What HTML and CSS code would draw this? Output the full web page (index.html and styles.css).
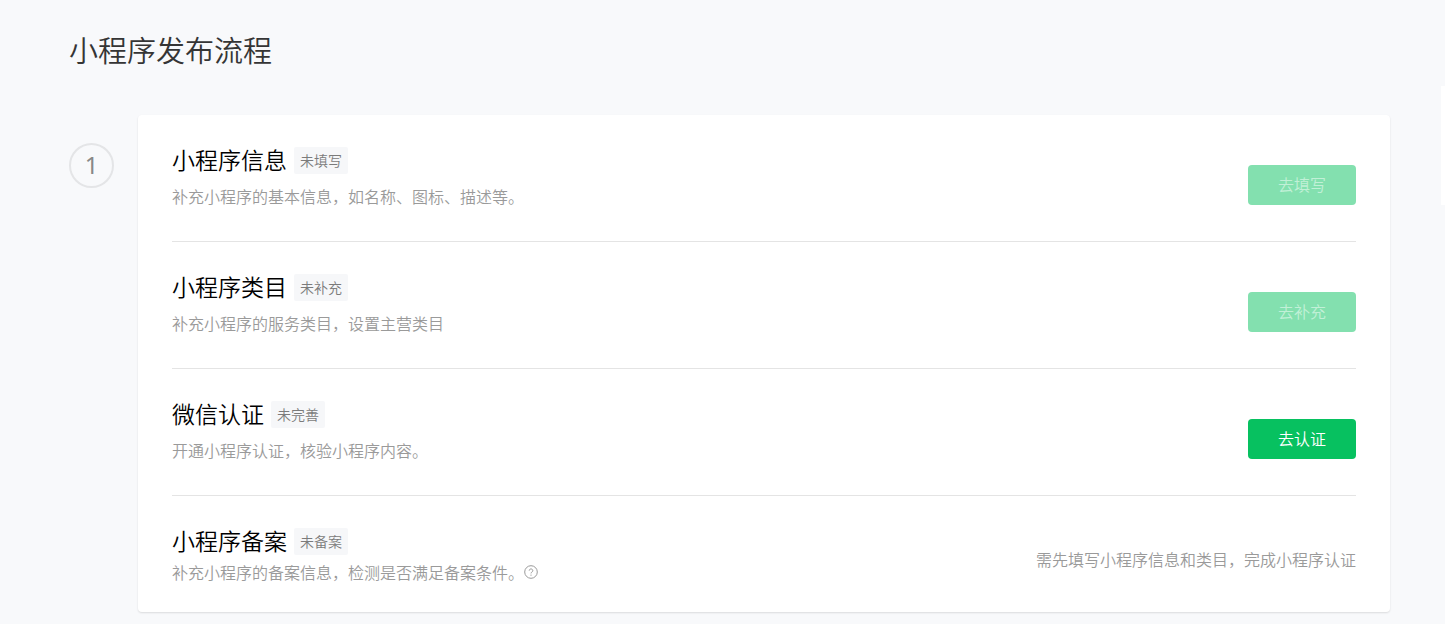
FILE: index.html
```
<!DOCTYPE html>
<html lang="zh-CN">
<head>
    <meta charset="UTF-8">
    <meta name="viewport" content="width=device-width, initial-scale=1.0">
    <title>小程序发布流程</title>
    <link rel="stylesheet" href="styles.css">
</head>
<body>
    <main class="page">
        <h1 class="page-title">小程序发布流程</h1>
        <section class="step">
            <div class="step-num">1</div>
            <div class="card">
                <div class="item">
                    <div class="info">
                        <div class="item-head">
                            <h2>小程序信息</h2>
                            <span class="tag">未填写</span>
                        </div>
                        <p class="desc">补充小程序的基本信息，如名称、图标、描述等。</p>
                    </div>
                    <div class="action">
                        <button type="button" class="btn" disabled>去填写</button>
                    </div>
                </div>
                <div class="item">
                    <div class="info">
                        <div class="item-head">
                            <h2>小程序类目</h2>
                            <span class="tag">未补充</span>
                        </div>
                        <p class="desc">补充小程序的服务类目，设置主营类目</p>
                    </div>
                    <div class="action">
                        <button type="button" class="btn" disabled>去补充</button>
                    </div>
                </div>
                <div class="item">
                    <div class="info">
                        <div class="item-head">
                            <h2>微信认证</h2>
                            <span class="tag">未完善</span>
                        </div>
                        <p class="desc">开通小程序认证，核验小程序内容。</p>
                    </div>
                    <div class="action">
                        <button type="button" class="btn">去认证</button>
                    </div>
                </div>
                <div class="item item-last">
                    <div class="info">
                        <div class="item-head">
                            <h2>小程序备案</h2>
                            <span class="tag">未备案</span>
                        </div>
                        <p class="desc">补充小程序的备案信息，检测是否满足备案条件。
                            <svg class="help" viewBox="0 0 14 14" width="14" height="14" aria-hidden="true">
                                <circle cx="7" cy="7" r="6.3" fill="none" stroke="currentColor"/>
                                <path d="M5.2 5.6a1.8 1.7 0 1 1 2.7 1.5c-.6.4-.9.6-.9 1.3" fill="none" stroke="currentColor"/>
                                <circle cx="7" cy="10.1" r=".7" fill="currentColor"/>
                            </svg>
                        </p>
                    </div>
                    <div class="action">
                        <span class="note">需先填写小程序信息和类目，完成小程序认证</span>
                    </div>
                </div>
            </div>
        </section>
    </main>
    <aside class="side-bar"></aside>
</body>
</html>
```

FILE: styles.css
```
* {
    margin: 0;
    padding: 0;
    box-sizing: border-box;
}
body {
    background-color: #f8f9fb;
    font-family: "Noto Sans CJK SC", sans-serif;
    font-weight: 350;
    color: #353535;
}
.page {
    padding: 28px 55px 12px 69px;
}
.page-title {
    font-size: 29px;
    line-height: 42px;
    font-weight: 350;
    margin-bottom: 45px;
}
.step {
    display: flex;
    align-items: flex-start;
    gap: 24px;
}
.step-num {
    flex: none;
    width: 45px;
    height: 45px;
    margin-top: 28px;
    border: 2px solid #e4e5e7;
    border-radius: 50%;
    font-family: "Noto Sans", sans-serif;
    font-size: 24px;
    line-height: 40px;
    font-weight: 400;
    text-align: center;
    color: #888;
}
.card {
    flex: 1;
    padding: 0 34px;
    background-color: #fff;
    border-radius: 4px;
    box-shadow: 0 1px 2px rgba(0, 0, 0, 0.12);
}
.item {
    display: flex;
    justify-content: space-between;
    align-items: flex-start;
    padding: 32px 0 33px;
    border-bottom: 1px solid #e4e4e4;
}
.item-head {
    display: flex;
    align-items: flex-start;
    gap: 7px;
}
.item-head h2 {
    font-size: 23px;
    line-height: 24px;
    font-weight: 350;
    color: #000;
}
.tag {
    padding: 0 6px;
    font-size: 14px;
    line-height: 27px;
    color: #7b7b7b;
    background-color: #f6f7f9;
    border-radius: 2px;
}
.desc {
    margin-top: 10px;
    font-size: 16px;
    line-height: 24px;
    color: #9a9a9a;
}
.action {
    padding-top: 18px;
}
.btn {
    display: block;
    width: 108px;
    height: 40px;
    padding-bottom: 2px;
    border: none;
    border-radius: 4px;
    background-color: #07c160;
    color: #fff;
    font-family: inherit;
    font-size: 16px;
    font-weight: 350;
    cursor: pointer;
}
.btn:disabled {
    background-color: #83e0af;
    color: #c1f0d7;
    cursor: default;
}
.item-last {
    padding-bottom: 28px;
    border-bottom: none;
}
.item-last .desc {
    display: flex;
    align-items: center;
    margin-top: 5px;
}
.note {
    font-size: 16px;
    line-height: 26px;
    color: #9a9a9a;
}
/* floating panel peeking in at the right edge */
.side-bar {
    position: fixed;
    top: 86px;
    right: 0;
    width: 4px;
    height: 119px;
    background-color: #fff;
}
```
